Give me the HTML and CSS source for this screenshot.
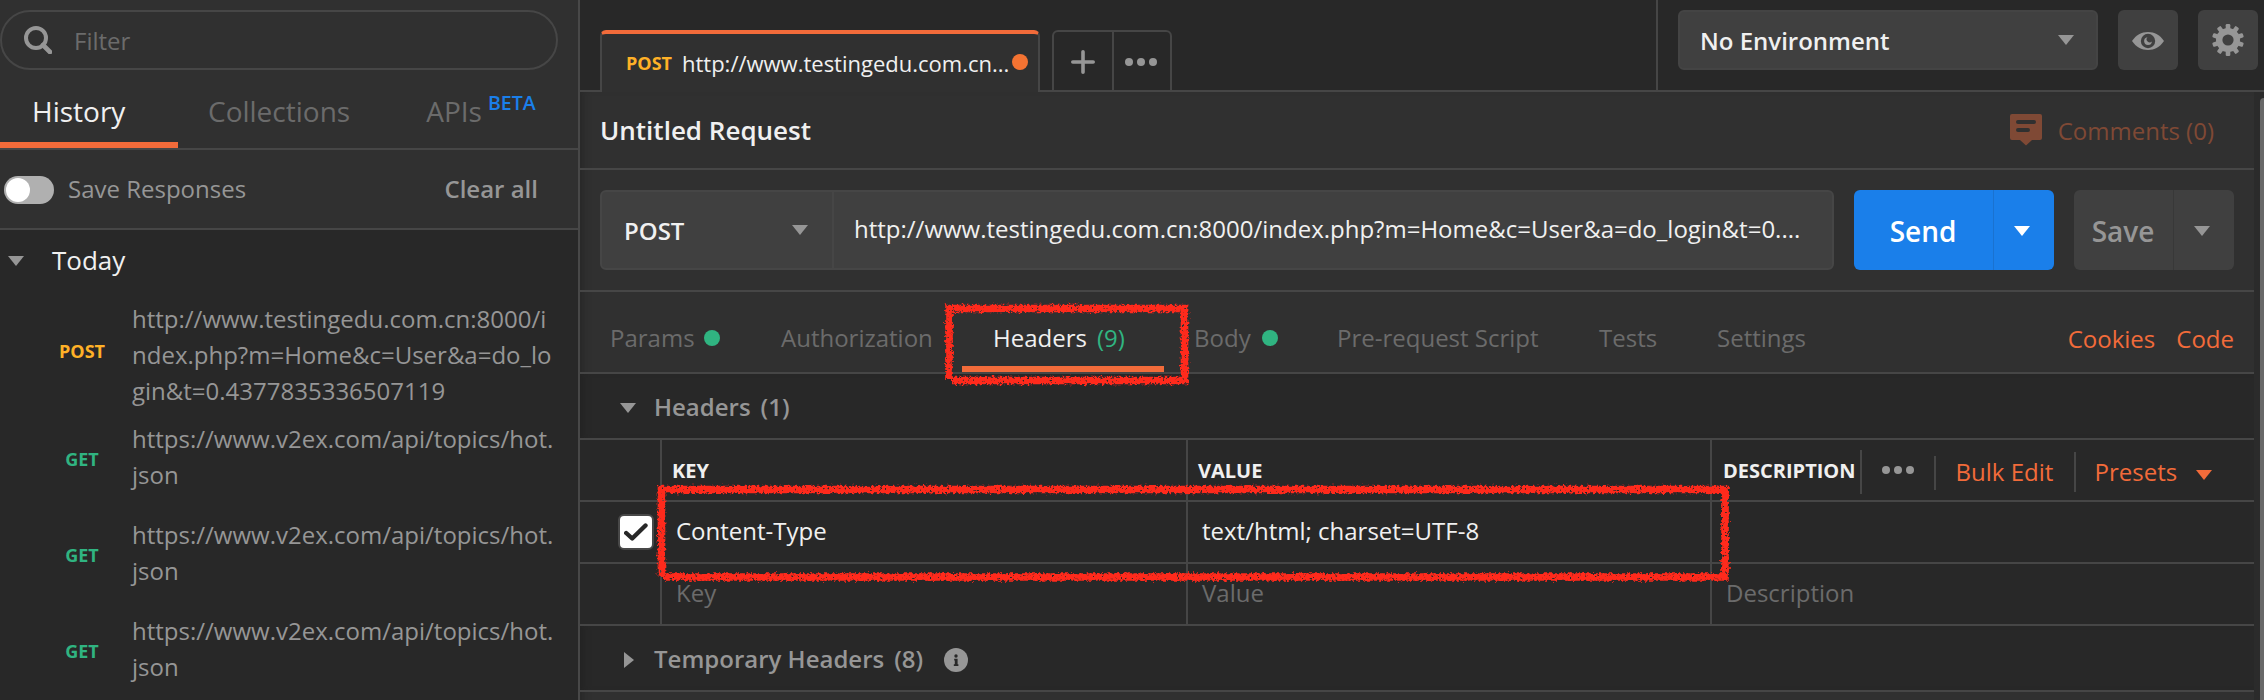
FILE: index.html
```html
<!DOCTYPE html>
<html lang="en">
<head>
<meta charset="utf-8">
<title>Untitled Request</title>
<link rel="stylesheet" href="styles.css">
</head>
<body>
<div class="app">
  <aside class="sidebar">
    <div class="side-top">
      <div class="search">
        <svg class="search-icon" viewBox="0 0 28 28"><circle cx="12" cy="12" r="10" fill="none" stroke="#969696" stroke-width="4"/><path d="M19 19L26 26" stroke="#969696" stroke-width="4.6" stroke-linecap="round"/></svg>
        <span>Filter</span>
      </div>
      <nav class="side-tabs">
        <span class="side-tab active">History</span>
        <span class="side-tab">Collections</span>
        <span class="side-tab">APIs<sup class="beta">BETA</sup></span>
      </nav>
    </div>
    <div class="save-row">
      <span class="toggle"><i class="knob"></i></span>
      <span class="save-label">Save Responses</span>
      <span class="clear">Clear all</span>
    </div>
    <div class="history">
      <div class="day"><i class="tri day-tri"></i><span>Today</span></div>
      <div class="item first"><b class="method post">POST</b><p>http://www.testingedu.com.cn:8000/i<br>ndex.php?m=Home&amp;c=User&amp;a=do_lo<br>gin&amp;t=0.4377835336507119</p></div>
      <div class="item"><b class="method get">GET</b><p>https://www.v2ex.com/api/topics/hot.<br>json</p></div>
      <div class="item"><b class="method get">GET</b><p>https://www.v2ex.com/api/topics/hot.<br>json</p></div>
      <div class="item"><b class="method get">GET</b><p>https://www.v2ex.com/api/topics/hot.<br>json</p></div>
    </div>
  </aside>

  <main class="main">
    <header class="topbar">
      <div class="tabs">
        <div class="req-tab"><b class="method post">POST</b><span class="req-tab-name">http://www.testingedu.com.cn...</span><i class="unsaved"></i></div>
        <div class="tab-actions">
          <span class="tab-btn"><svg width="24" height="24" viewBox="0 0 24 24"><path d="M12 1.8V22.2M1.8 12H22.2" stroke="#969696" stroke-width="3.6" stroke-linecap="round"/></svg></span>
          <span class="tab-btn"><svg width="32" height="8" viewBox="0 0 32 8" fill="#969696"><circle cx="4" cy="4" r="4"/><circle cx="16" cy="4" r="4"/><circle cx="28" cy="4" r="4"/></svg></span>
        </div>
      </div>
      <div class="env">
        <div class="env-select"><span>No Environment</span><i class="tri"></i></div>
        <div class="icon-btn eye"><svg width="32" height="18" viewBox="0 0 32 18"><path d="M0 9C4 3 9.500 0 16 0S28 3 32 9C28 15 22.500 18 16 18S4 15 0 9Z" fill="#969696"/><circle cx="16" cy="9" r="7.200" fill="#404040"/><path d="M15.500 5.200A3.900 3.900 0 1 0 19.900 9.400A3 3 0 0 1 15.500 5.200Z" fill="#969696"/></svg></div>
        <div class="icon-btn"><svg width="32" height="32" viewBox="-16 -16 32 32"><g fill="#969696"><rect id="tooth" x="-2.300" y="-16" width="4.600" height="9" rx="1.200"/><use href="#tooth" transform="rotate(36)"/><use href="#tooth" transform="rotate(72)"/><use href="#tooth" transform="rotate(108)"/><use href="#tooth" transform="rotate(144)"/><use href="#tooth" transform="rotate(180)"/><use href="#tooth" transform="rotate(216)"/><use href="#tooth" transform="rotate(252)"/><use href="#tooth" transform="rotate(288)"/><use href="#tooth" transform="rotate(324)"/><circle r="12"/></g><circle r="5.600" fill="#404040"/></svg></div>
      </div>
    </header>

    <div class="body">
      <section class="request">
        <div class="title-row">
          <h1>Untitled Request</h1>
          <div class="comments">
            <svg width="32" height="32" viewBox="0 0 32 32"><path d="M2 0H30Q32 0 32 2V24Q32 26 30 26H22L16 31.500L10 26H2Q0 26 0 24V2Q0 0 2 0Z" fill="#7f4935"/><path d="M8 8H24M8 16H18" stroke="#303030" stroke-width="4" stroke-linecap="round"/></svg>
            <span>Comments (0)</span>
          </div>
        </div>
        <div class="url-row">
          <div class="url-box">
            <div class="verb"><span>POST</span><i class="tri"></i></div>
            <div class="url">http://www.testingedu.com.cn:8000/index.php?m=Home&amp;c=User&amp;a=do_login&amp;t=0....</div>
          </div>
          <div class="btn send"><span class="btn-label">Send</span><span class="btn-drop"><i class="tri"></i></span></div>
          <div class="btn save"><span class="btn-label">Save</span><span class="btn-drop"><i class="tri"></i></span></div>
        </div>
        <div class="req-tabs">
          <span class="rt params">Params<i class="dot"></i></span>
          <span class="rt auth">Authorization</span>
          <span class="rt headers">Headers<em>(9)</em></span>
          <span class="rt payload">Body<i class="dot"></i></span>
          <span class="rt pre">Pre-request Script</span>
          <span class="rt tests">Tests</span>
          <span class="rt settings">Settings</span>
          <span class="links"><span>Cookies</span><span>Code</span></span>
        </div>
        <div class="group"><i class="tri"></i><span>Headers</span><span class="count">(1)</span></div>
        <div class="grid">
          <div class="cell"></div><div class="cell th">KEY</div><div class="cell th">VALUE</div>
          <div class="cell th desc"><span>DESCRIPTION</span>
            <span class="more"><svg width="32" height="8" viewBox="0 0 32 8" fill="#969696"><circle cx="4" cy="4" r="4"/><circle cx="16" cy="4" r="4"/><circle cx="28" cy="4" r="4"/></svg></span>
            <span class="bulk">Bulk Edit</span>
            <span class="presets">Presets<i class="tri"></i></span>
          </div>
          <div class="cell check-cell"><span class="check"><svg width="24" height="22" viewBox="0 0 24 22"><path d="M2.200 12L8.200 17.500L21.500 4.500" fill="none" stroke="#282828" stroke-width="4.400" stroke-linecap="round" stroke-linejoin="round"/></svg></span></div><div class="cell td">Content-Type</div><div class="cell td">text/html; charset=UTF-8</div><div class="cell td"></div>
          <div class="cell"></div><div class="cell td hint">Key</div><div class="cell td hint">Value</div><div class="cell td hint">Description</div>
        </div>
        <div class="group temp"><i class="tri-right"></i><span>Temporary Headers</span><span class="count">(8)</span>
          <svg class="info" width="24" height="24" viewBox="0 0 24 24"><circle cx="12" cy="12" r="12" fill="#969696"/><circle cx="12" cy="8" r="1.700" fill="#282828"/><path d="M10.200 10.800H13.600V16.200H14.400V18H9.800V16.200H10.800V12.400H10.200Z" fill="#282828"/></svg>
        </div>
      </section>
      <div class="scroll"><i class="thumb"></i></div>
    </div>
  </main>

  <svg class="marks" width="2264" height="700" viewBox="0 0 2264 700">
    <defs>
      <filter id="chalk" filterUnits="userSpaceOnUse" x="640" y="290" width="1110" height="310">
        <feTurbulence type="fractalNoise" baseFrequency="0.4" numOctaves="2" seed="4" result="n"/>
        <feDisplacementMap in="SourceGraphic" in2="n" scale="6" xChannelSelector="R" yChannelSelector="G" result="d"/>
        <feColorMatrix in="n" type="matrix" values="0 0 0 0 0  0 0 0 0 0  0 0 0 0 0  0 0 -9 0 7" result="holes"/>
        <feComposite in="d" in2="holes" operator="in"/>
      </filter>
    </defs>
    <g filter="url(#chalk)" fill="none" stroke="#ff2a1c" stroke-width="7.600">
      <path d="M949 379V308.500H1184.500V380.500H952"/>
      <path d="M661.500 576V489.500H1725V577H664"/>
    </g>
  </svg>
</div>
</body>
</html>
```
FILE: styles.css
```css
* { box-sizing: border-box; }
body { margin: 0; background: #303030; font-family: "Open Sans", "Noto Sans", sans-serif; font-size: 24px; color: #f0f0f0; }
h1, p { margin: 0; }
svg { display: block; flex: none; }
i, em { font-style: normal; flex: none; }
.app { position: relative; display: flex; width: 2264px; height: 700px; overflow: hidden; white-space: nowrap; }
.tri { width: 0; height: 0; border: 8px solid transparent; border-top: 10px solid #969696; border-bottom: 0; }
.tri-right { width: 0; height: 0; border: 8px solid transparent; border-left: 10px solid #969696; border-right: 0; }
.method { font-size: 18px; font-weight: 700; }
.post { color: #ffb127; }
.get { color: #30b481; }

/* Sidebar */
.sidebar { display: flex; flex-direction: column; flex: none; width: 580px; border-right: 2px solid #484848; }
.side-top { flex: none; height: 150px; padding-top: 10px; border-bottom: 2px solid #464646; }
.search { display: flex; align-items: center; width: 558px; height: 60px; padding: 0 22px; gap: 22px; border: 2px solid #464646; border-radius: 30px; color: #6b6b6b; }
.search-icon { width: 28px; height: 28px; }
.side-tabs { display: flex; height: 78px; font-size: 28px; line-height: 82px; color: #6b6b6b; }
.side-tab { padding-left: 30px; }
.side-tab.active { width: 178px; padding-left: 32px; border-bottom: 6px solid #f26b3a; color: #f0f0f0; }
.side-tab:last-child { padding-left: 76px; }
.beta { margin-left: 6px; vertical-align: 12px; font-size: 19.500px; line-height: 1; font-weight: 600; color: #1a7fea; }
.save-row { display: flex; flex: none; align-items: center; height: 80px; padding: 0 40px 0 4px; border-bottom: 2px solid #464646; color: #969696; }
.toggle { display: flex; width: 50px; height: 28px; margin-top: 2px; padding: 2px; border-radius: 14px; background: #b0b0b0; }
.knob { width: 24px; height: 24px; border-radius: 50%; background: #fff; }
.save-label { margin: 0 0 2px 14px; }
.clear { margin: 0 0 2px auto; font-weight: 600; }
.history { flex: 1; min-height: 0; background: #282828; color: #969696; }
.day { display: flex; align-items: center; height: 62px; padding: 0 0 2px 8px; font-size: 26px; color: #f0f0f0; }
.day-tri { margin: 2px 28px 0 0; }
.item { display: flex; align-items: flex-start; height: 96px; padding-top: 10px; line-height: 36px; }
.item.first { height: 119px; padding-top: 9px; }
.item .method { width: 132px; padding: 20px 0 0 32px; text-align: center; }
.item.first .method { padding-top: 32px; }

/* Tab bar and environment */
.main { display: flex; flex-direction: column; flex: 1; min-width: 0; }
.topbar { display: flex; flex: none; height: 92px; background: #282828; }
.tabs { display: flex; flex: 1; align-items: flex-end; padding-left: 20px; background: linear-gradient(#464646, #464646) 0 100% / 100% 2px no-repeat; }
.req-tab { display: flex; align-items: center; width: 440px; height: 62px; padding: 0 0 0 24px; border: 2px solid #464646; border-top: 4px solid #f26b3a; border-bottom: 0; border-radius: 6px 6px 0 0; background: #303030; }
.req-tab-name { margin-left: 10px; font-size: 22px; }
.unsaved { width: 16px; height: 16px; margin: 0 0 2px 3px; border-radius: 50%; background: #f47332; }
.tab-actions { display: flex; width: 120px; height: 62px; margin-left: 12px; border: 2px solid #464646; border-radius: 6px 6px 0 0; }
.tab-btn { display: flex; width: 58px; align-items: center; justify-content: center; padding: 2px 2px 0 0; }
.tab-btn:first-child { width: 59px; padding-right: 0; }
.tab-btn + .tab-btn { border-left: 2px solid #464646; }
.env { display: flex; width: 608px; padding: 10px 0 0 20px; gap: 20px; border-left: 2px solid #464646; border-bottom: 2px solid #464646; }
.env-select { display: flex; align-items: center; justify-content: space-between; width: 420px; height: 60px; padding: 0 22px 0 20px; border: 2px solid #444; border-radius: 6px; background: #404040; font-weight: 600; }
.icon-btn { display: flex; align-items: center; justify-content: center; width: 60px; height: 60px; border-radius: 6px; background: #404040; }
.eye { padding-top: 2px; }

/* Request pane */
.body { display: flex; flex: 1; }
.request { width: 1674px; box-shadow: inset 8px 0 8px -6px #262626; }
.title-row { display: flex; align-items: center; justify-content: space-between; height: 78px; padding: 0 40px 0 20px; border-bottom: 2px solid #464646; }
h1 { font-size: 26px; font-weight: 600; }
.comments { display: flex; align-items: center; gap: 16px; color: #7f4935; }
.url-row { display: flex; height: 122px; padding: 20px; gap: 20px; border-bottom: 2px solid #464646; }
.url-box { display: flex; width: 1234px; height: 80px; border: 2px solid #464646; border-radius: 6px; background: #404040; }
.verb { display: flex; align-items: center; justify-content: space-between; width: 232px; padding: 0 24px 0 22px; border-right: 2px solid #464646; font-weight: 600; }
.url { padding-left: 20px; line-height: 73px; }
.btn { display: flex; width: 200px; height: 80px; border-radius: 6px; background: #1a7fea; color: #fff; font-size: 28px; font-weight: 600; line-height: 82px; }
.btn-label { flex: 1; padding-right: 1px; text-align: center; }
.btn-drop { display: flex; align-items: center; justify-content: center; width: 61px; padding: 2px 4px 0 0; border-left: 1px solid #1a72d0; }
.send .tri { border-top-color: #fff; }
.save { width: 160px; background: #404040; color: #969696; }
.save .btn-drop { border-color: #383838; }
.req-tabs { display: flex; align-items: stretch; height: 82px; padding-right: 20px; border-bottom: 2px solid #464646; color: #6b6b6b; }
.rt { display: flex; align-items: center; flex: none; padding-top: 10px; }
.dot { width: 16px; height: 16px; margin: 2px 0 0 9px; border-radius: 50%; background: #30b481; }
.params { width: 201px; padding-left: 30px; }
.auth { width: 181px; }
.headers { width: 202px; padding: 16px 0 0 31px; color: #f0f0f0; border-bottom: 6px solid #f26b3a; }
.headers em { margin-left: 10px; color: #30b481; }
.payload { width: 173px; padding-left: 30px; }
.payload .dot { margin-left: 11px; }
.pre { width: 262px; }
.tests { width: 118px; }
.links { display: flex; align-items: center; gap: 21px; margin-left: auto; padding-top: 13px; color: #f26b3a; }
.group { display: flex; align-items: center; height: 66px; padding-left: 40px; border-bottom: 2px solid #464646; background: #282828; color: #969696; font-weight: 600; box-shadow: inset 8px 0 8px -6px #222; }
.group .tri { margin: 3px 18px 0 0; }
.count { margin-left: 10px; }
.grid { display: grid; grid-template-columns: 80px 526px 524px 544px; grid-auto-rows: 62px; background: #282828; }
.cell { display: flex; align-items: center; border-bottom: 2px solid #464646; }
.cell + .cell { border-left: 2px solid #464646; }
.cell:nth-child(4n+1) { border-left: 0; }
.th { padding: 1px 0 0 10px; font-size: 20px; font-weight: 700; }
.td { padding: 0 0 3px 14px; }
.hint { color: #6b6b6b; }
.desc { align-items: flex-start; padding: 10px 0 0 11px; line-height: 42px; }
.more { display: flex; align-items: center; width: 74px; height: 44px; margin-left: 4px; padding: 0 0 4px 20px; border-left: 2px solid #464646; }
.bulk, .presets { display: flex; align-items: center; font-size: 24px; font-weight: 400; color: #f26b3a; }
.bulk { width: 140px; height: 34px; margin-top: 6px; padding: 0 0 2px 20px; border-left: 2px solid #464646; }
.presets { height: 40px; margin-top: 2px; padding-left: 19px; border-left: 2px solid #464646; }
.presets .tri { margin: 5px 0 0 19px; border-top-color: #f26b3a; }
.check-cell { padding-left: 38px; }
.check { display: flex; align-items: center; justify-content: center; width: 36px; height: 36px; border: 2px solid #484848; border-radius: 6px; background: #fff; }
.temp .tri-right { margin: 3px 20px 0 4px; }
.info { margin: 3px 0 0 21px; }
.scroll { flex: 1; padding: 6px 0 0 6px; background: #2b2b2b; }
.thumb { display: block; height: 620px; border-radius: 8px 0 0 0; background: #686868; }

/* Hand-drawn callouts over the page */
.marks { position: absolute; inset: 0; }
```
